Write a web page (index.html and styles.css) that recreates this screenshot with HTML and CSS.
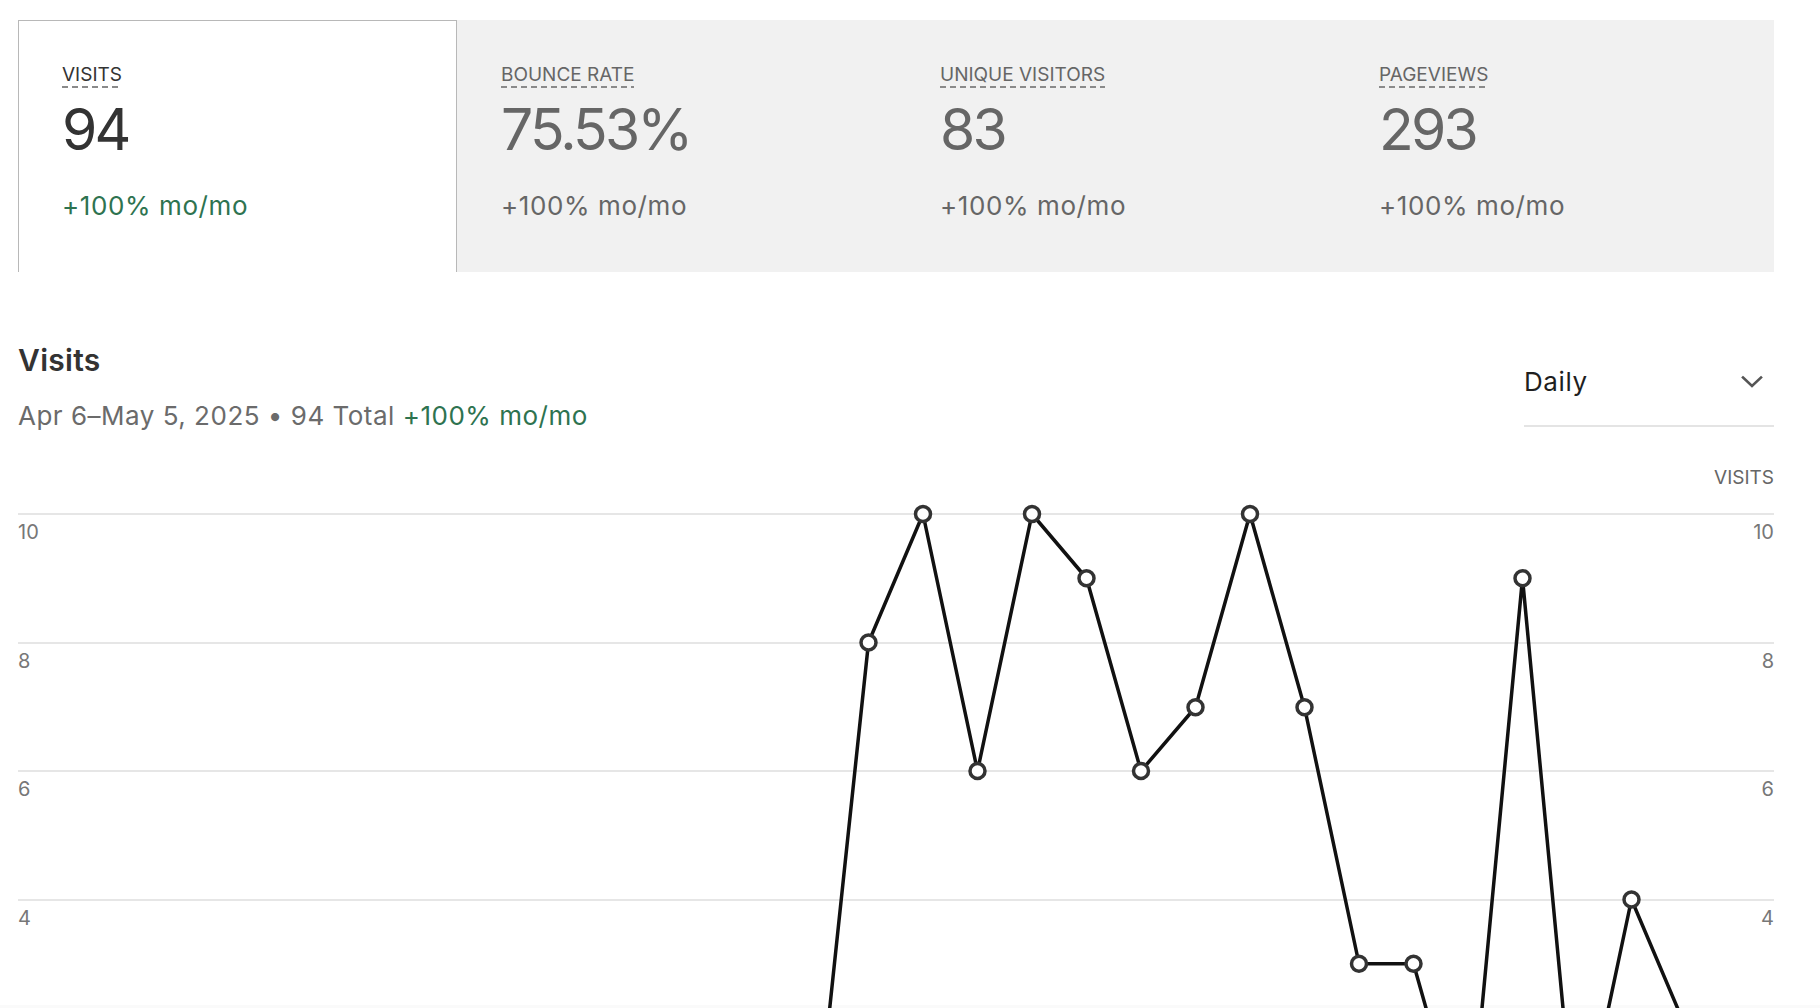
FILE: index.html
```html
<!DOCTYPE html>
<html lang="en">
<head>
<meta charset="utf-8">
<title>Visits</title>
<link rel="stylesheet" href="styles.css">
</head>
<body>
<main class="page">
  <section class="stats">
    <div class="stat stat--active">
      <div class="stat__label"><span class="dashed">VISITS</span></div>
      <div class="stat__value">94</div>
      <div class="stat__delta">+100% mo/mo</div>
    </div>
    <div class="stat">
      <div class="stat__label"><span class="dashed">BOUNCE RATE</span></div>
      <div class="stat__value">75.53%</div>
      <div class="stat__delta">+100% mo/mo</div>
    </div>
    <div class="stat">
      <div class="stat__label"><span class="dashed">UNIQUE VISITORS</span></div>
      <div class="stat__value">83</div>
      <div class="stat__delta">+100% mo/mo</div>
    </div>
    <div class="stat">
      <div class="stat__label"><span class="dashed">PAGEVIEWS</span></div>
      <div class="stat__value">293</div>
      <div class="stat__delta">+100% mo/mo</div>
    </div>
  </section>

  <section class="chart-card">
    <header class="chart-head">
      <div class="chart-info">
        <h2 class="chart-title">Visits</h2>
        <p class="chart-sub">Apr 6–May 5, 2025 • 94 Total <span class="up">+100% mo/mo</span></p>
      </div>
      <div class="select">
        <span class="select__value">Daily</span>
        <svg class="select__chevron" width="22" height="14" viewBox="0 0 22 14" aria-hidden="true">
          <polyline points="2,2.5 11,11 20,2.5" fill="none" stroke="#555" stroke-width="2.6" stroke-linecap="square"/>
        </svg>
      </div>
    </header>
    <div class="axis-title">VISITS</div>
    <svg class="chart" width="1756" height="519" viewBox="18 489 1756 519">
      <g class="grid">
        <line x1="18" x2="1774" y1="514" y2="514"/>
        <line x1="18" x2="1774" y1="643" y2="643"/>
        <line x1="18" x2="1774" y1="771" y2="771"/>
        <line x1="18" x2="1774" y1="900" y2="900"/>
      </g>
      <g class="ticks">
        <text x="18" y="539">10</text>
        <text x="18" y="668">8</text>
        <text x="18" y="796">6</text>
        <text x="18" y="925">4</text>
      </g>
      <g class="ticks ticks--right">
        <text x="1774" y="539">10</text>
        <text x="1774" y="668">8</text>
        <text x="1774" y="796">6</text>
        <text x="1774" y="925">4</text>
      </g>
      <polyline class="line" points="160,1156.5 814,1156.5 868.5,642.5 923,514 977.5,771 1032,514 1086.5,578.25 1141,771 1195.5,707.25 1250,514 1304.5,707.25 1359,963.75 1413.5,963.75 1468,1156.5 1522.5,578.25 1577,1156.5 1631.5,899.5 1686,1028 1740.5,1156.5"/>
      <g class="dots">
        <circle cx="868.5" cy="642.5" r="7.5"/>
        <circle cx="923" cy="514" r="7.5"/>
        <circle cx="977.5" cy="771" r="7.5"/>
        <circle cx="1032" cy="514" r="7.5"/>
        <circle cx="1086.5" cy="578.25" r="7.5"/>
        <circle cx="1141" cy="771" r="7.5"/>
        <circle cx="1195.5" cy="707.25" r="7.5"/>
        <circle cx="1250" cy="514" r="7.5"/>
        <circle cx="1304.5" cy="707.25" r="7.5"/>
        <circle cx="1359" cy="963.75" r="7.5"/>
        <circle cx="1413.5" cy="963.75" r="7.5"/>
        <circle cx="1468" cy="1156.5" r="7.5"/>
        <circle cx="1522.5" cy="578.25" r="7.5"/>
        <circle cx="1577" cy="1156.5" r="7.5"/>
        <circle cx="1631.5" cy="899.5" r="7.5"/>
        <circle cx="1686" cy="1028" r="7.5"/>
        <circle cx="1740.5" cy="1156.5" r="7.5"/>
      </g>
    </svg>
  </section>
</main>
<div class="bottom-fade"></div>
</body>
</html>
```

FILE: styles.css
```css
* {
  box-sizing: border-box;
}

html,
body {
  margin: 0;
  padding: 0;
  background: #fff;
}

body {
  font-family: Inter, "Noto Sans", "Liberation Sans", sans-serif;
  color: #333;
  height: 1008px;
  overflow: hidden;
}

.page {
  padding: 20px 46px 0 18px;
}

/* Stat cards */
.stats {
  display: grid;
  grid-template-columns: repeat(4, 1fr);
  height: 252px;
  background: #f1f1f1;
}

.stat {
  padding: 43px 43px 0;
  border: 1px solid transparent;
  border-bottom: 0;
  color: #666;
}

.stat--active {
  background: #fff;
  border-color: #b8b8b8;
  color: #333;
}

.stat__label {
  font-size: 19px;
  line-height: 22px;
  letter-spacing: 0;
}

.dashed {
  padding-bottom: 2px;
  background-image: linear-gradient(to right, #8a8a8a 0 62%, transparent 62% 100%);
  background-size: 10px 2px;
  background-repeat: repeat-x;
  background-position: 0 100%;
}

.stat__value {
  margin-top: 12px;
  font-size: 57px;
  line-height: 64px;
  letter-spacing: -2.8px;
}

.stat__delta {
  margin-top: 29px;
  font-size: 26px;
  line-height: 30px;
  letter-spacing: 0.6px;
}

.stat--active .stat__delta {
  color: #2e7350;
}

/* Chart header */
.chart-head {
  display: flex;
  justify-content: space-between;
  align-items: flex-start;
  margin-top: 71px;
}

.chart-title {
  margin: 0;
  font-size: 30px;
  line-height: 34px;
  font-weight: 600;
  letter-spacing: 0.3px;
  color: #333;
}

.chart-sub {
  margin: 24px 0 0;
  font-size: 26px;
  line-height: 30px;
  letter-spacing: 0.5px;
  color: #6b6b6b;
}

.up {
  color: #2e7350;
}

.select {
  width: 250px;
  margin-top: 24px;
  padding: 0 11px 28px 0;
  border-bottom: 2px solid #e4e4e4;
  display: flex;
  justify-content: space-between;
  align-items: center;
  font-size: 26px;
  line-height: 30px;
  letter-spacing: 0.6px;
  color: #1f1f1f;
}

.select__chevron {
  display: block;
}

.axis-title {
  margin-top: 36px;
  text-align: right;
  font-size: 19px;
  line-height: 22px;
  color: #666;
}

/* Chart */
.chart {
  display: block;
  overflow: hidden;
}

.grid line {
  stroke: #e6e6e6;
  stroke-width: 2;
}

.ticks text {
  font-family: Inter, "Noto Sans", "Liberation Sans", sans-serif;
  font-size: 20px;
  fill: #777;
}

.ticks--right text {
  text-anchor: end;
}

.line {
  fill: none;
  stroke: #111;
  stroke-width: 3.5;
  stroke-linejoin: round;
}

.dots circle {
  fill: #fff;
  stroke: #333;
  stroke-width: 3.5;
}

.bottom-fade {
  position: fixed;
  left: 0;
  right: 0;
  bottom: 0;
  height: 3px;
  background: rgba(0, 0, 0, 0.02);
}
```
